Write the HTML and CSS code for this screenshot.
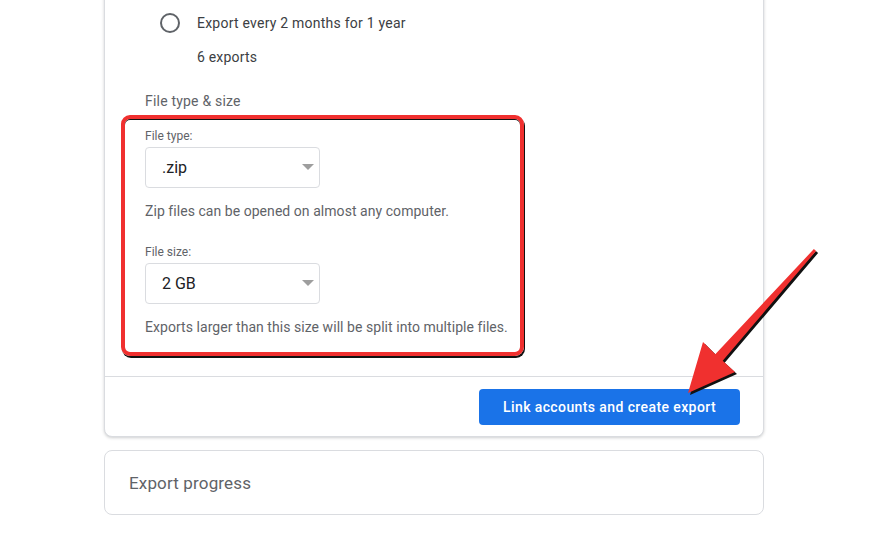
FILE: index.html
```html
<!DOCTYPE html>
<html>
<head>
<meta charset="utf-8">
<link rel="stylesheet" href="styles.css">
</head>
<body>
<div class="page">
  <div class="card main-card">
    <div class="options">
      <div class="radio-row">
        <span class="radio"></span>
        <span class="radio-label">Export every 2 months for 1 year</span>
      </div>
      <div class="radio-sub">6 exports</div>
    </div>
    <div class="section-title">File type &amp; size</div>
    <div class="highlight">
      <div class="field-label">File type:</div>
      <div class="select"><span class="select-value">.zip</span><span class="caret"></span></div>
      <div class="helper">Zip files can be opened on almost any computer.</div>
      <div class="field-label second">File size:</div>
      <div class="select"><span class="select-value">2 GB</span><span class="caret"></span></div>
      <div class="helper">Exports larger than this size will be split into multiple files.</div>
    </div>
    <div class="footer">
      <button class="primary">Link accounts and create export</button>
    </div>
  </div>
  <div class="card progress-card">
    <div class="progress-title">Export progress</div>
  </div>
</div>
<svg class="arrow" width="870" height="536" viewBox="0 0 870 536">
  <polygon points="690,395 705,344 717.3,356.2 815.9,251 818.1,253 724.7,362.8 737,374" fill="#111"/>
  <polygon points="688,393 703,342 715.3,354.2 813.9,249 816.1,251 722.7,360.8 735,372" fill="#f0302f"/>
</svg>
</body>
</html>
```

FILE: styles.css
```css
* { box-sizing: border-box; }
html, body { margin: 0; padding: 0; background: #fff; }
body {
  font-family: Roboto, "Noto Sans", "Liberation Sans", sans-serif;
  color: #3c4043;
  width: 870px;
  height: 536px;
  overflow: hidden;
  position: relative;
}
.page {
  padding-left: 104px;
  width: 764px;
}
.card {
  border: 1px solid #dadce0;
  border-radius: 8px;
  background: #fff;
}
.main-card {
  margin-top: -40px;
  padding-top: 52px;
  box-shadow: 0 1px 3px rgba(60, 64, 67, 0.25);
}
.options {
  padding-left: 55px;
}
.radio-row {
  display: flex;
  align-items: center;
  height: 20px;
}
.radio {
  width: 20px;
  height: 20px;
  border: 2px solid #5f6368;
  border-radius: 50%;
  flex: none;
}
.radio-label {
  margin-left: 17px;
  font-size: 14px;
  color: #3c4043;
  letter-spacing: 0.23px;
}
.radio-sub {
  margin-top: 14px;
  margin-left: 37px;
  font-size: 14px;
  line-height: 20px;
  color: #3c4043;
  letter-spacing: 0.2px;
}
.section-title {
  margin-top: 24px;
  margin-left: 40px;
  font-size: 14px;
  line-height: 20px;
  color: #5f6368;
  letter-spacing: 0.2px;
}
.highlight {
  margin-top: 4px;
  margin-left: 16px;
  width: 403px;
  height: 241px;
  border: 4px solid #f0302f;
  border-radius: 9px;
  padding: 9px 0 0 20px;
  box-shadow: 1px 2px 0 #111, inset 0 1px 0 #111;
}
.field-label {
  font-size: 12px;
  line-height: 16px;
  color: #5f6368;
}
.field-label.second {
  margin-top: 23px;
}
.select {
  margin-top: 3px;
  width: 175px;
  height: 41px;
  border: 1px solid #dadce0;
  border-radius: 4px;
  display: flex;
  align-items: center;
  justify-content: space-between;
  padding: 0 5px 0 16px;
}
.select-value {
  font-size: 16px;
  color: #202124;
}
.caret {
  width: 0;
  height: 0;
  border-left: 6px solid transparent;
  border-right: 6px solid transparent;
  border-top: 6px solid #9e9e9e;
  margin-top: -1px;
}
.helper {
  margin-top: 13px;
  font-size: 14px;
  line-height: 20px;
  color: #5f6368;
  letter-spacing: 0.05px;
}
.footer {
  margin-top: 20px;
  border-top: 1px solid #dadce0;
  padding: 12px 23px 11px 0;
  display: flex;
  justify-content: flex-end;
}
.primary {
  width: 261px;
  height: 36px;
  background: #1a73e8;
  color: #fff;
  border: none;
  border-radius: 4px;
  font-family: Roboto, "Noto Sans", "Liberation Sans", sans-serif;
  font-size: 14px;
  font-weight: 500;
  letter-spacing: 0.4px;
}
.progress-card {
  margin-top: 13px;
  height: 65px;
  display: flex;
  align-items: center;
  padding-left: 24px;
}
.progress-title {
  font-size: 17px;
  color: #5f6368;
  letter-spacing: 0.15px;
  margin-top: 1px;
}
.arrow {
  position: absolute;
  left: 0;
  top: 0;
  pointer-events: none;
}
```
